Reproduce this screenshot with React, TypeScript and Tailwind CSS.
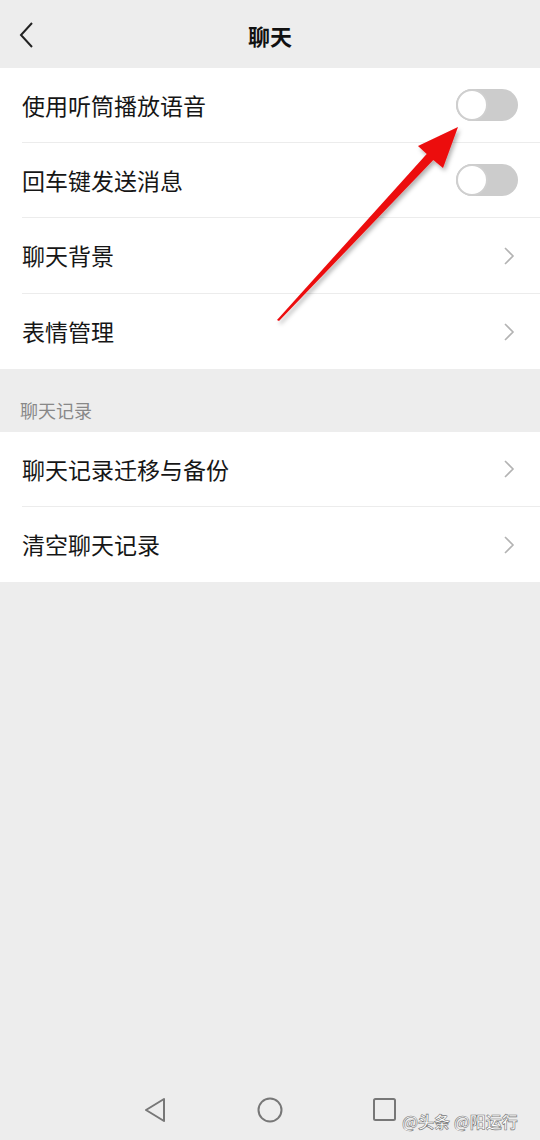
import React from "react";

const font = { fontFamily: '"Noto Sans CJK SC", "Noto Sans", sans-serif' };

function Toggle() {
  return (
    <div className="relative w-[62px] h-[32px] rounded-full bg-[#cccccc]">
      <div className="absolute left-0 top-0 w-[32px] h-[32px] rounded-full bg-white border-[2px] border-[#cfcfcf]" />
    </div>
  );
}

function Chevron() {
  return (
    <svg width="12" height="20" viewBox="0 0 12 20" className="mr-[3px]">
      <path d="M2 2 L10 10 L2 18" fill="none" stroke="#b3b3b3" strokeWidth="1.6" />
    </svg>
  );
}

function Row({ label, right, last, tall }: { label: string; right: React.ReactNode; last?: boolean; tall?: boolean }) {
  return (
    <div className="pl-[22px]">
      <div
        className={`${tall ? "h-[76px]" : "h-[75px]"} flex items-center justify-between pr-[22px] ${
          last ? "" : "border-b border-[#ececec]"
        }`}
      >
        <span className="text-[23px] text-[#161616]">{label}</span>
        {right}
      </div>
    </div>
  );
}

export default function App() {
  return (
    <div className="relative w-[540px] h-[1140px] bg-[#ededed] overflow-hidden" style={font}>
      <div className="relative h-[68px] flex items-center justify-center">
        <svg width="16" height="26" viewBox="0 0 16 26" className="absolute left-[19px] top-[22px]">
          <path d="M13 1 L2 13 L13 25" fill="none" stroke="#222" strokeWidth="2" />
        </svg>
        <span className="text-[22px] font-bold text-[#111] mt-[2px]">聊天</span>
      </div>

      <div className="bg-white">
        <Row label="使用听筒播放语音" right={<Toggle />} />
        <Row label="回车键发送消息" right={<Toggle />} />
        <Row label="聊天背景" right={<Chevron />} tall />
        <Row label="表情管理" right={<Chevron />} last />
      </div>

      <div className="h-[63px] flex items-end pl-[20px] pb-[8px]">
        <span className="text-[18px] text-[#888]">聊天记录</span>
      </div>

      <div className="bg-white">
        <Row label="聊天记录迁移与备份" right={<Chevron />} />
        <Row label="清空聊天记录" right={<Chevron />} last />
      </div>

      <div className="absolute left-0 right-0 bottom-0 h-[60px] flex items-center justify-center gap-[90px]">
        <svg width="24" height="26" viewBox="0 0 24 26">
          <path d="M21 2 L3 13 L21 24 Z" fill="none" stroke="#777" strokeWidth="2" strokeLinejoin="round" />
        </svg>
        <svg width="26" height="26" viewBox="0 0 26 26">
          <circle cx="13" cy="13" r="11.5" fill="none" stroke="#777" strokeWidth="2" />
        </svg>
        <svg width="24" height="24" viewBox="0 0 24 24">
          <rect x="1" y="1" width="21" height="21" rx="1.5" fill="none" stroke="#777" strokeWidth="2" />
        </svg>
      </div>
      <div
        className="absolute left-[402px] top-[1109px] text-[16px] text-white font-bold"
        style={{ WebkitTextStroke: "0.6px #777" }}
      >
        @头条 @阳运行
      </div>

      <svg className="absolute left-0 top-0 pointer-events-none" width="540" height="1140">
        <defs>
          <filter id="sh" x="-20%" y="-20%" width="140%" height="140%">
            <feDropShadow dx="2" dy="3" stdDeviation="2" floodColor="#000" floodOpacity="0.3" />
          </filter>
        </defs>
        <path
          d="M277 320 L426.7 153.9 L418 146 L458 127 L443 168 L433.3 160.1 L279 321 Z"
          fill="#ec0a0f"
          filter="url(#sh)"
        />
      </svg>
    </div>
  );
}
